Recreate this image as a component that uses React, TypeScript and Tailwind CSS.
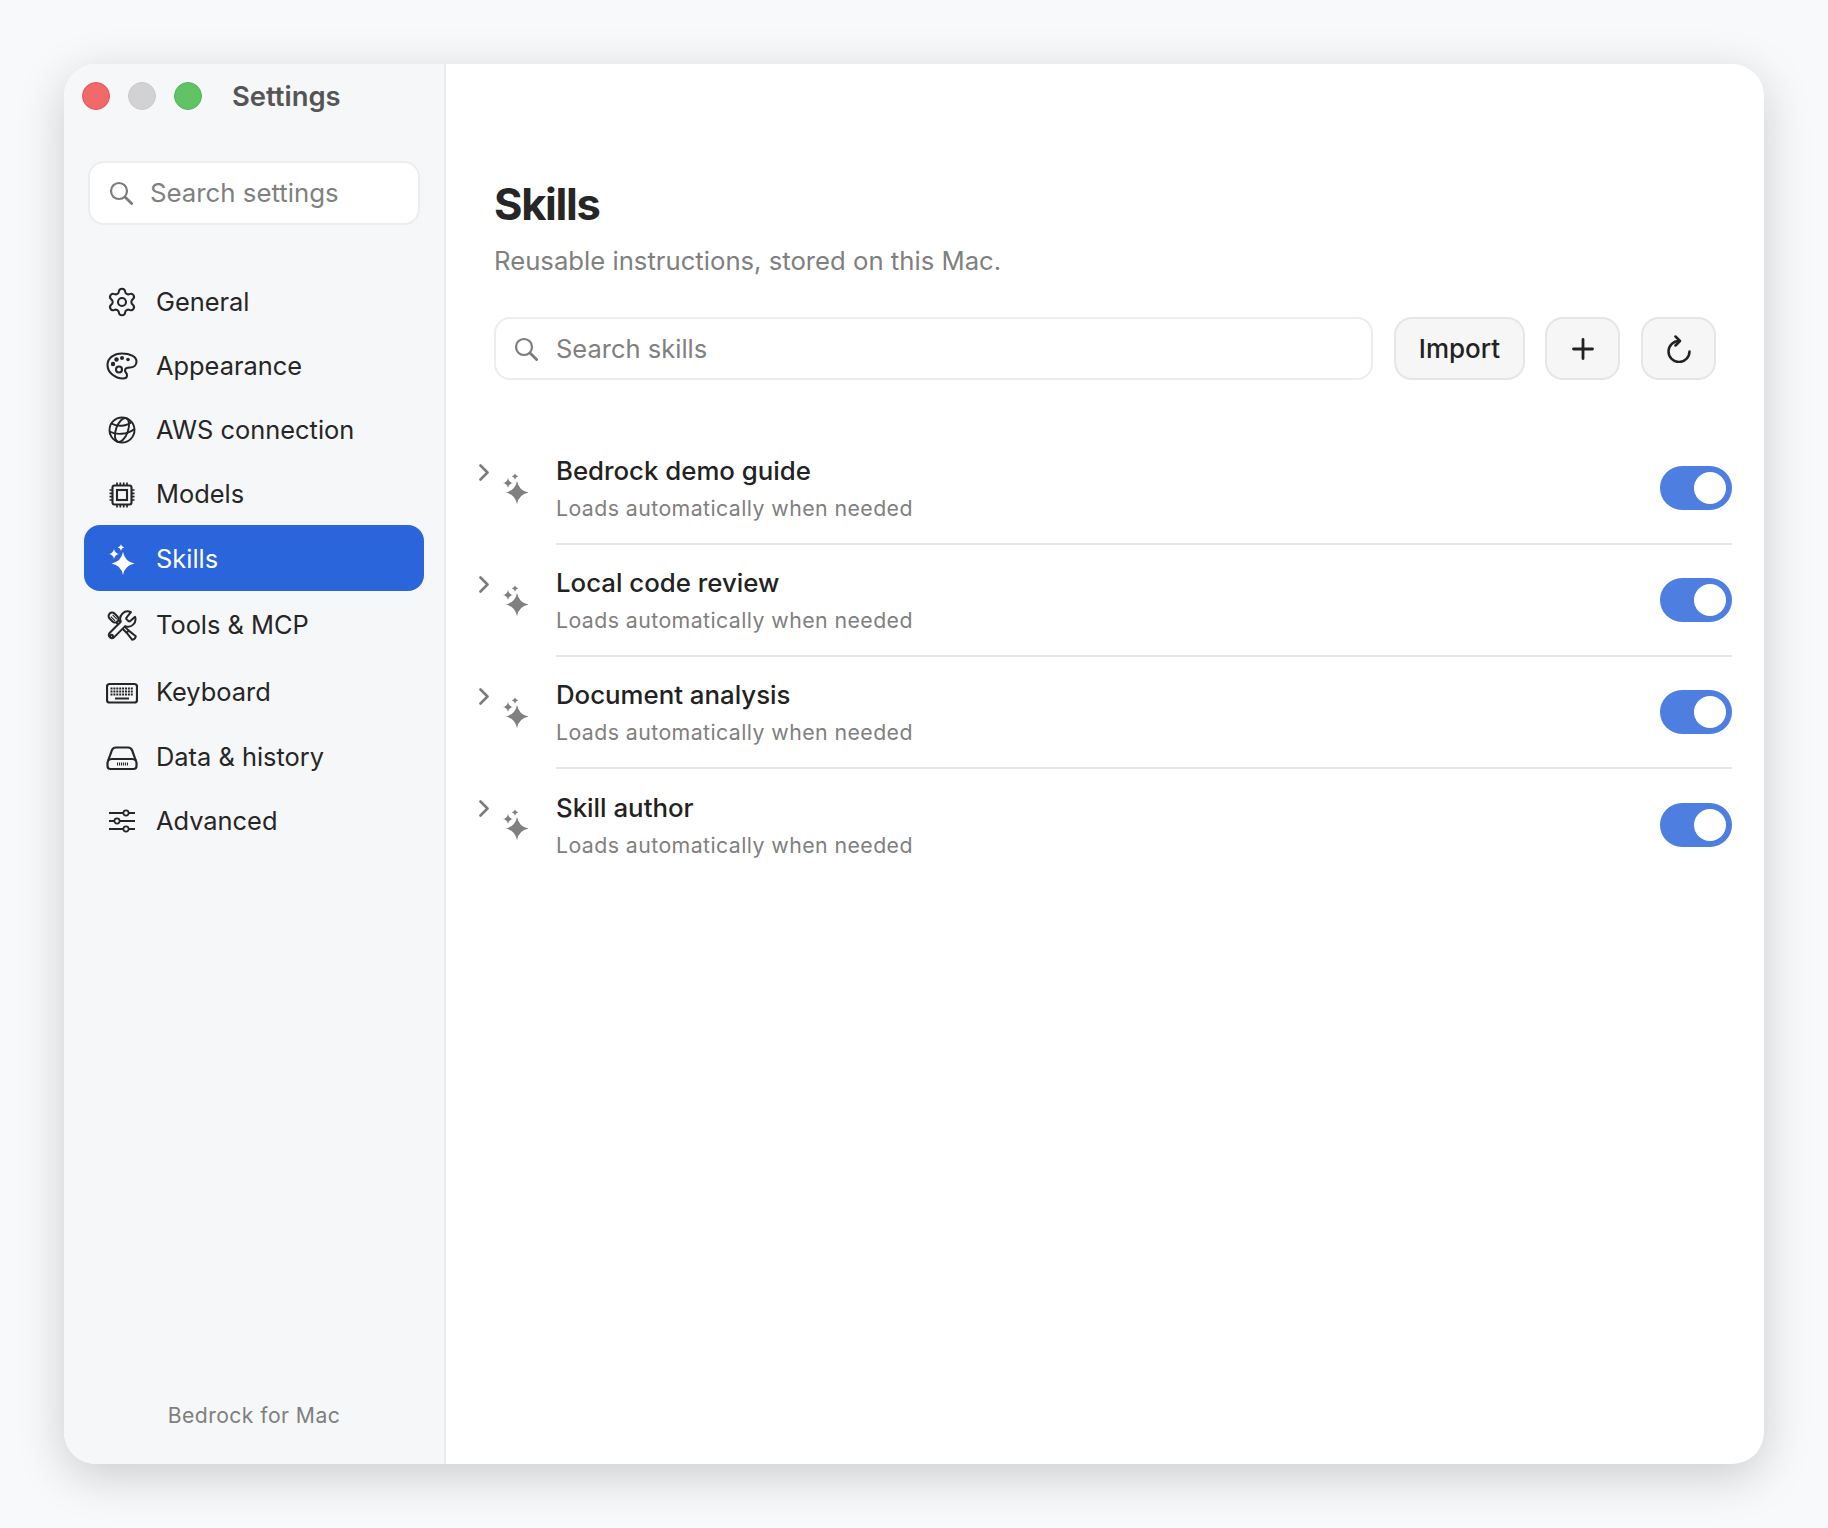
import React from 'react';
import { Settings } from 'lucide-react';

const star = (cx: number, cy: number, r: number) => {
  const k = r * 0.16;
  return `M${cx} ${cy - r}Q${cx + k} ${cy - k} ${cx + r} ${cy}Q${cx + k} ${cy + k} ${cx} ${cy + r}Q${cx - k} ${cy + k} ${cx - r} ${cy}Q${cx - k} ${cy - k} ${cx} ${cy - r}Z`;
};

const Sparkles = ({ className }: { className: string }) => (
  <svg viewBox="0 0 32 32" className={className} fill="currentColor">
    <path d={star(17, 19.5, 11.5)} />
    <path d={star(8, 10, 5)} />
    <path d={star(15, 3.5, 3.2)} />
  </svg>
);

const SearchIcon = () => (
  <svg viewBox="0 0 24 24" className="h-[24px] w-[24px] shrink-0 text-[#7c7c7c]" fill="none" stroke="currentColor" strokeWidth={2.2} strokeLinecap="round">
    <circle cx="10" cy="10" r="8" />
    <path d="M16 16l6.6 6.6" strokeWidth={2.8} />
  </svg>
);

const box = 'h-[32px] w-[32px] shrink-0';

const Palette = () => (
  <svg viewBox="0 0 32 32" className={box} fill="none" stroke="currentColor" strokeWidth={2.1}>
    <path d="M16 3.5C8 3.5 1.5 8 1.5 15C1.5 22.5 9 28.5 17 28.5C20 28.5 21 27 21 25.2C21 23 19 22.5 19 20.5C19 18 21 17.5 24 17.5C28 17.5 30.5 15 30.5 11.5C30.5 6.5 24 3.5 16 3.5Z" />
    <circle cx="13" cy="19.5" r="3" />
    <g fill="currentColor" stroke="none">
      <circle cx="7" cy="14" r="2.2" />
      <circle cx="10.5" cy="9.5" r="2.2" />
      <circle cx="16" cy="8" r="2" />
      <circle cx="22" cy="9.5" r="1.8" />
    </g>
  </svg>
);

const Globe = () => (
  <svg viewBox="0 0 32 32" className={box} fill="none" stroke="currentColor" strokeWidth={1.9}>
    <circle cx="16" cy="16" r="12.5" />
    <ellipse cx="16" cy="16" rx="6" ry="12.5" transform="rotate(20 16 16)" />
    <path d="M5.5 9.5C11 13 21 12.5 26 7.5" />
    <path d="M3.6 17.5C10 21 21 21 28.4 15" />
  </svg>
);

const Cpu = () => (
  <svg viewBox="0 0 32 32" className={box} fill="none" stroke="currentColor" strokeWidth={2.1}>
    <rect x="6.5" y="6.5" width="19" height="19" rx="2" />
    <rect x="11" y="11" width="10" height="10" />
    <path d="M11 3.5v3M14.3 3.5v3M17.7 3.5v3M21 3.5v3M11 25.5v3M14.3 25.5v3M17.7 25.5v3M21 25.5v3M3.5 11h3M3.5 14.3h3M3.5 17.7h3M3.5 21h3M25.5 11h3M25.5 14.3h3M25.5 17.7h3M25.5 21h3" strokeWidth={1.7} />
  </svg>
);

const Tools = () => (
  <svg viewBox="0 0 32 32" className={box} fill="none" stroke="currentColor" strokeWidth={2} strokeLinejoin="round">
    <g transform="rotate(-45 16 16)">
      <rect x="12.5" y="-1.5" width="7" height="11" rx="3.4" fill="#f6f7f9" />
      <path d="M14.7 1.5v6M17.3 1.5v6" strokeWidth={1.2} />
      <path d="M14.5 9.5V24M17.5 9.5V24" />
      <path d="M14.5 24L13.5 33Q16 35 18.5 33L17.5 24Z" />
    </g>
    <path
      transform="scale(1.333)"
      fill="#f6f7f9"
      strokeWidth={1.5}
      d="M15.5 5.6a1 1 0 0 0 0 1.4l1.3 1.3a1 1 0 0 0 1.4 0l3.6-3.2a5.6 5.6 0 0 1-7.4 7l-8.6 8.6a2.4 2.4 0 0 1-3.3-3.3l8.6-8.6a5.6 5.6 0 0 1 7.6-7.2z"
    />
    <circle cx="5.5" cy="26.3" r="1.5" />
  </svg>
);

const KeyboardIcon = () => (
  <svg viewBox="0 0 32 32" className={box} fill="none" stroke="currentColor" strokeWidth={2.2}>
    <rect x="1" y="7" width="30" height="18.5" rx="2.6" />
    <path d="M4.5 11.5H27.5M4.5 14.5H27.5M4.5 17.5H27.5" strokeWidth={2} strokeDasharray="2 0.9" />
    <path d="M9 21.5H23" strokeWidth={2} />
  </svg>
);

const Drive = () => (
  <svg viewBox="0 0 32 32" className={box} fill="none" stroke="currentColor" strokeWidth={2.2} strokeLinejoin="round">
    <path d="M1.5 20.5L5.8 8.5Q6.9 5.5 10 5.5H22Q25.1 5.5 26.2 8.5L30.5 20.5V24Q30.5 27 27.5 27H4.5Q1.5 27 1.5 24Z" />
    <path d="M2 18.5Q3.5 17 6 17H26Q28.5 17 30 18.5" />
    <path d="M11 22H22" strokeWidth={3} strokeDasharray="1.1 0.9" />
  </svg>
);

const Sliders = () => (
  <svg viewBox="0 0 32 32" className={box} fill="none" stroke="currentColor" strokeWidth={2}>
    <path d="M3 8H29M3 16H29M3 24H29" />
    <g fill="#f6f7f9" strokeWidth={1.7}>
      <circle cx="20" cy="8" r="2.6" />
      <circle cx="11" cy="16" r="2.6" />
      <circle cx="20" cy="24" r="2.6" />
    </g>
  </svg>
);

// rows are not quite even in the picture, hence a height per row
const nav = [
  { label: 'General', h: 'h-[64px]', icon: <Settings size={32} strokeWidth={1.55} /> },
  { label: 'Appearance', h: 'h-[64px]', icon: <Palette /> },
  { label: 'AWS connection', h: 'h-[64px]', icon: <Globe /> },
  { label: 'Models', h: 'h-[63px] pt-[2px]', icon: <Cpu /> },
  { label: 'Skills', h: 'h-[66px] pt-[3px]', icon: <Sparkles className={box} />, active: true },
  { label: 'Tools & MCP', h: 'h-[67px] pt-[2px]', icon: <Tools /> },
  { label: 'Keyboard', h: 'h-[67px] pt-[2px]', icon: <KeyboardIcon /> },
  { label: 'Data & history', h: 'h-[63px] pt-[2px]', icon: <Drive /> },
  { label: 'Advanced', h: 'h-[64px] pt-[2px]', icon: <Sliders /> },
];

const skills = ['Bedrock demo guide', 'Local code review', 'Document analysis', 'Skill author'];

export default function App() {
  return (
    <div className="min-h-screen bg-[#f8f9fb] p-[64px] font-['Inter',sans-serif]">
      <div className="flex h-[1400px] w-[1700px] overflow-hidden rounded-[32px] bg-white shadow-[0_12px_48px_rgba(0,0,0,0.18)]">
        <aside className="flex w-[382px] shrink-0 flex-col border-r-2 border-[#e9eaec] bg-[#f6f7f9] px-[20px]">
          <div className="mt-[18px] -ml-[2px] flex h-[28px] items-center">
            <span className="h-[28px] w-[28px] rounded-full border border-[#e25353] bg-[#f06a6a]" />
            <span className="ml-[18px] h-[28px] w-[28px] rounded-full border border-[#c9c9cc] bg-[#d2d2d5]" />
            <span className="ml-[18px] h-[28px] w-[28px] rounded-full border border-[#4fb858] bg-[#62c366]" />
            <span className="ml-[30px] pt-[2px] text-[27.4px] font-semibold text-[#555555]">Settings</span>
          </div>
          <div className="mt-[51px] ml-[4px] flex h-[64px] w-[332px] items-center gap-[17px] rounded-[16px] border-2 border-[#eceded] bg-white pl-[19px]">
            <SearchIcon />
            <span className="text-[25.8px] text-[#808080]">Search settings</span>
          </div>
          <nav className="mt-[45px] flex flex-col">
            {nav.map((item) => (
              <div
                key={item.label}
                className={`flex items-center gap-[18px] rounded-[16px] pl-[22px] text-[25.4px] ${item.h} ${
                  item.active ? 'bg-[#2b65db] text-white' : 'text-[#262626]'
                }`}
              >
                {item.icon}
                <span>{item.label}</span>
              </div>
            ))}
          </nav>
          <div className="mt-auto mb-[32px] text-center text-[21.2px] tracking-[0.02em] text-[#7f7f7f]">Bedrock for Mac</div>
        </aside>
        <main className="flex min-w-0 flex-1 flex-col pl-[48px] pr-[32px]">
          <h1 className="mt-[111px] text-[43.5px] font-bold leading-[58px] tracking-[-0.03em] text-[#262626]">Skills</h1>
          <p className="mt-[10px] text-[25.7px] leading-[36px] text-[#7f7f7f]">Reusable instructions, stored on this Mac.</p>
          <div className="mt-[38px] flex items-center pr-[16px]">
            <div className="flex h-[63px] flex-1 items-center gap-[18px] rounded-[16px] border-2 border-[#eceded] bg-white pl-[18px]">
              <SearchIcon />
              <span className="pt-[2px] text-[25.5px] text-[#808080]">Search skills</span>
            </div>
            <button className="ml-[21px] h-[63px] w-[131px] rounded-[18px] border-2 border-[#e6e6e6] bg-[#f6f6f6] text-[26px] font-medium text-[#222222]">Import</button>
            <button className="ml-[20px] flex h-[63px] w-[75px] items-center justify-center rounded-[18px] border-2 border-[#e6e6e6] bg-[#f6f6f6] text-[#222222]">
              <svg viewBox="0 0 22 22" className="h-[22px] w-[22px]" fill="none" stroke="currentColor" strokeWidth={2.8} strokeLinecap="round">
                <path d="M11 1.5V20.5M1.5 11H20.5" />
              </svg>
            </button>
            <button className="ml-[21px] flex h-[63px] w-[75px] items-center justify-center rounded-[18px] border-2 border-[#e6e6e6] bg-[#f6f6f6] text-[#222222]">
              <svg viewBox="0 0 24 28" className="h-[28px] w-[24px]" fill="none" stroke="currentColor" strokeWidth={2.5} strokeLinecap="round" strokeLinejoin="round">
                <path d="M12 6A10.5 10.5 0 1 0 22.5 16.5" />
                <path d="M8.5 1.5L13 6L8.500 10.5" />
              </svg>
            </button>
          </div>
          <div className="mt-[53px] -ml-[15px] flex flex-col">
            {skills.map((name, i) => (
              <div key={name} className="flex h-[112px]">
                <svg viewBox="0 0 10 17" className="mt-[31px] h-[17px] w-[10px] shrink-0 text-[#7c7c7c]" fill="none" stroke="currentColor" strokeWidth={2.6} strokeLinecap="round" strokeLinejoin="round">
                  <path d="M1.5 1.5L8.5 8.5L1.5 15.5" />
                </svg>
                <Sparkles className="ml-[11px] mt-[40px] h-[32px] w-[32px] shrink-0 text-[#808080]" />
                <div className={`ml-[24px] flex flex-1 items-center justify-between ${i < skills.length - 1 ? 'border-b-2 border-[#e6e6e6]' : ''}`}>
                  <div>
                    <div className="text-[25.8px] font-medium leading-[36px] text-[#222222]">{name}</div>
                    <div className="mt-[3px] text-[21.3px] leading-[32px] tracking-[0.02em] text-[#7f7f7f]">Loads automatically when needed</div>
                  </div>
                  <div className="flex h-[44px] w-[72px] items-center justify-end rounded-full bg-[#4d7ee0] pr-[6px]">
                    <span className="h-[32px] w-[32px] rounded-full bg-white" />
                  </div>
                </div>
              </div>
            ))}
          </div>
        </main>
      </div>
    </div>
  );
}
